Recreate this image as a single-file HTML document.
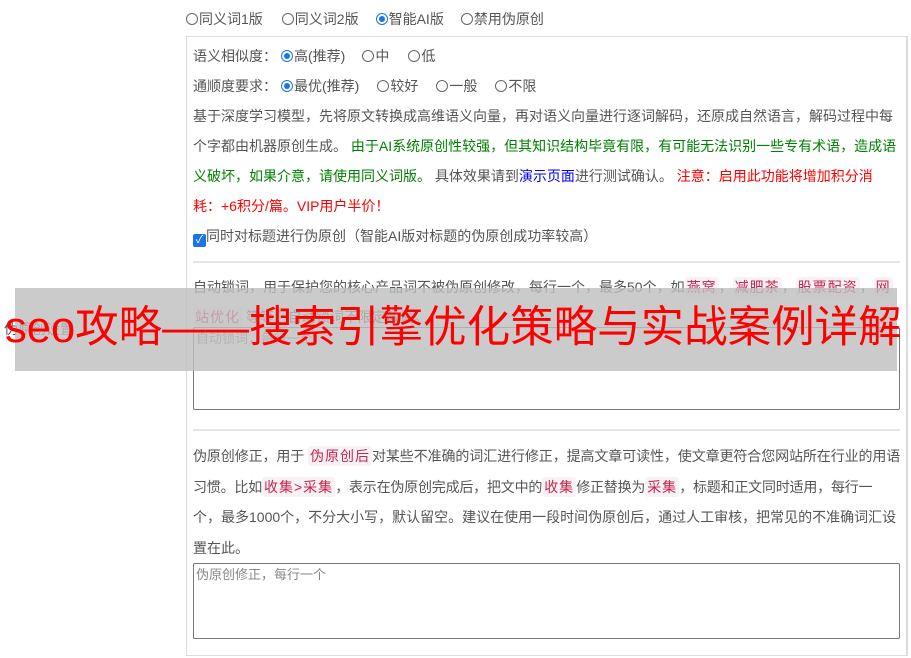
<!DOCTYPE html>
<html><head><meta charset="utf-8"><style>
*{margin:0;padding:0;box-sizing:border-box}
body{width:911px;height:658px;overflow:hidden;background:#fff;font-family:"Liberation Sans","Noto Sans CJK SC",sans-serif;font-size:14px;color:#555;position:relative}
.top{position:absolute;left:186px;top:9px;line-height:20px;white-space:nowrap}
.rad{display:inline-block;width:12px;height:12px;border:1px solid #666;border-radius:50%;vertical-align:-1px;margin-right:1px;position:relative}
.rad.on{border-color:#1a73e8}
.rad.on:after{content:"";position:absolute;left:2px;top:2px;width:6px;height:6px;border-radius:50%;background:#1a73e8}
.sp{display:inline-block}
.box{position:absolute;left:186px;top:36px;width:722px;height:620px;border:1px solid #ddd;border-right:2px solid #ddd}
.in{position:absolute;left:6px;width:707px;line-height:30px}
.in div{white-space:nowrap;height:30px}
.lab{position:absolute;left:4px;top:319px}
.g{color:green}.b{color:#00f}.r{color:#f00}
code{font-family:"Liberation Sans","Noto Sans CJK SC",sans-serif;color:#c7254e;background:#f9f2f4;padding:2px 2px;border-radius:3px;letter-spacing:1px}
hr{position:absolute;left:6px;width:707px;border:0;border-top:2px solid #e5e5e5}
.ta{position:absolute;left:6px;width:707px;border:1px solid #777;border-radius:2px;font-size:13px;color:#888;padding:2px 2px;line-height:18px}
.cb{display:inline-block;width:13px;height:13px;background:#1a73e8;border-radius:2px;vertical-align:-2px;color:#fff;font-size:11px;line-height:13px;text-align:center}
.ov{position:absolute;left:15px;top:288px;width:882px;height:83px;background:rgba(190,190,190,.8)}
.ot{position:absolute;left:5px;top:303px;font-size:43.5px;color:#f00;line-height:50px;white-space:nowrap}
</style></head><body>
<div class="top"><span class="rad"></span>同义词1版<span class="sp" style="width:19px"></span><span class="rad"></span>同义词2版<span class="sp" style="width:17px"></span><span class="rad on"></span>智能AI版<span class="sp" style="width:17px"></span><span class="rad"></span>禁用伪原创</div>
<div class="lab">伪原创设置</div>
<div class="box">
<div class="in" style="top:4px;white-space:nowrap">语义相似度：<span class="sp" style="width:4px"></span><span class="rad on"></span>高(推荐)<span class="sp" style="width:17px"></span><span class="rad"></span>中<span class="sp" style="width:19px"></span><span class="rad"></span>低</div>
<div class="in" style="top:34px;white-space:nowrap">通顺度要求：<span class="sp" style="width:4px"></span><span class="rad on"></span>最优(推荐)<span class="sp" style="width:18px"></span><span class="rad"></span>较好<span class="sp" style="width:18px"></span><span class="rad"></span>一般<span class="sp" style="width:18px"></span><span class="rad"></span>不限</div>
<div class="in" style="top:64px">
<div>基于深度学习模型，先将原文转换成高维语义向量，再对语义向量进行逐词解码，还原成自然语言，解码过程中每</div>
<div>个字都由机器原创生成。 <span class="g">由于AI系统原创性较强，但其知识结构毕竟有限，有可能无法识别一些专有术语，造成语</span></div>
<div><span class="g">义破坏，如果介意，请使用同义词版。</span> 具体效果请到<span class="b">演示页面</span>进行测试确认。 <span class="r">注意：启用此功能将增加积分消</span></div>
<div><span class="r">耗：+6积分/篇。VIP用户半价！</span></div>
</div>
<div class="in" style="top:184px;white-space:nowrap"><span class="cb">✓</span>同时对标题进行伪原创（智能AI版对标题的伪原创成功率较高）</div>
<hr style="top:224px">
<div class="in" style="top:235px">
<div>自动锁词，用于保护您的核心产品词不被伪原创修改，每行一个，最多50个，如<code>燕窝</code>，<code>减肥茶</code>，<code>股票配资</code>，<code>网</code></div>
<div><code>站优化</code> 等等，自动锁词不限定数量。</div>
</div>
<div class="ta" style="top:290px;height:83px">自动锁词，每行一个</div>
<hr style="top:392px">
<div class="in" style="top:404px">
<div style="height:30.7px;letter-spacing:-0.1px">伪原创修正，用于 <code>伪原创后</code>对某些不准确的词汇进行修正，提高文章可读性，使文章更符合您网站所在行业的用语</div>
<div style="height:30.7px;letter-spacing:-0.2px">习惯。比如<code>收集&gt;采集</code>，表示在伪原创完成后，把文中的<code>收集</code>修正替换为<code>采集</code>，标题和正文同时适用，每行一</div>
<div style="height:30.7px">个，最多1000个，不分大小写，默认留空。建议在使用一段时间伪原创后，通过人工审核，把常见的不准确词汇设</div>
<div style="height:30.7px">置在此。</div>
</div>
<div class="ta" style="top:526px;height:76px">伪原创修正，每行一个</div>
</div>
<div class="ov"></div>
<div class="ot">seo攻略——搜索引擎优化策略与实战案例详解</div>
</body></html>
